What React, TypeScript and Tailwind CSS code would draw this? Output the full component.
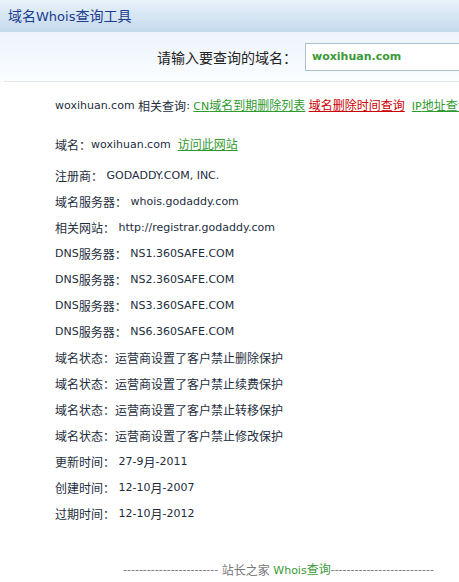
import React from "react";

const CJK_SPLIT = /([\u3000-\u303f\u3400-\u9fff\uff00-\uffef]+)/;
const CJK_TEST = /^[\u3000-\u303f\u3400-\u9fff\uff00-\uffef]+$/;

function T({ s, cjk = "text-[12px]" }: { s: string; cjk?: string }) {
  return (
    <>
      {s.split(CJK_SPLIT).map((p, i) =>
        p === "" ? null : CJK_TEST.test(p) ? (
          <span key={i} className={cjk + " font-['Noto_Sans_CJK_SC',sans-serif]"}>
            {p}
          </span>
        ) : (
          <span key={i}>{p}</span>
        )
      )}
    </>
  );
}

const rows: [string, string][] = [
  ["注册商：", " GODADDY.COM, INC."],
  ["域名服务器：", " whois.godaddy.com"],
  ["相关网站：", " http://registrar.godaddy.com"],
  ["DNS服务器：", " NS1.360SAFE.COM"],
  ["DNS服务器：", " NS2.360SAFE.COM"],
  ["DNS服务器：", " NS3.360SAFE.COM"],
  ["DNS服务器：", " NS6.360SAFE.COM"],
  ["域名状态：", "运营商设置了客户禁止删除保护"],
  ["域名状态：", "运营商设置了客户禁止续费保护"],
  ["域名状态：", "运营商设置了客户禁止转移保护"],
  ["域名状态：", "运营商设置了客户禁止修改保护"],
  ["更新时间：", " 27-9月-2011"],
  ["创建时间：", " 12-10月-2007"],
  ["过期时间：", " 12-10月-2012"],
];

export default function App() {
  return (
    <div className="w-[459px] h-[582px] overflow-hidden bg-white font-['DejaVu_Sans','Noto_Sans_CJK_SC',sans-serif] text-[11px] text-[#1d2d3d] whitespace-nowrap">
      {/* header */}
      <div className="h-[32px] bg-gradient-to-b from-[#e9f2fa] to-[#c4d9ec] pl-[8px] flex items-center text-[13px] text-[#1a3d8f]">
        <span className="whitespace-pre">
          <T s="域名Whois查询工具" cjk="text-[14px]" />
        </span>
      </div>
      {/* search row */}
      <div className="h-[50px] bg-gradient-to-b from-[#edf4fb] to-[#fbfdff] flex">
        <div className="flex-1 ml-[4px] border-b border-[#e2e7ea] flex items-start pt-[11px] pl-[153px]">
          <div className="h-[28px] flex items-center text-[14px] text-[#222] font-['Noto_Sans_CJK_SC',sans-serif]">
            请输入要查询的域名：
          </div>
          <div className="ml-[8px] h-[28px] w-[200px] shrink-0 border border-[#a8c2d0] bg-white flex items-center pl-[6px] text-[11px] font-bold text-[#3a9a38]">
            woxihuan.com
          </div>
        </div>
      </div>
      {/* content */}
      <div className="pl-[55px] pt-[14px]">
        <div className="h-[20px] flex items-center whitespace-pre">
          <span>woxihuan.com </span>
          <T s="相关查询" />
          <span>: </span>
          <span className="underline text-[#2f9a2f]">
            <T s="CN域名到期删除列表" />
          </span>
          <span> </span>
          <span className="underline text-[#cc0000]">
            <T s="域名删除时间查询" />
          </span>
          <span>{"  "}</span>
          <span className="underline text-[#2f9a2f]">
            <T s="IP地址查询" />
          </span>
        </div>
        <div className="mt-[19px] h-[20px] flex items-center whitespace-pre">
          <T s="域名：" />
          <span>woxihuan.com{"  "}</span>
          <span className="underline text-[#2f9a2f]">
            <T s="访问此网站" />
          </span>
        </div>
        <div className="mt-[8px] flex flex-col">
          {rows.map(([k, v], i) => (
            <div key={i} className="h-[26px] flex items-center whitespace-pre">
              <T s={k} />
              <T s={v} />
            </div>
          ))}
        </div>
      </div>
      {/* footer */}
      <div className="mt-[33px] h-[20px] flex items-center pl-[123px] text-[#777] whitespace-pre">
        <span>------------------------ </span>
        <T s="站长之家" />
        <span> </span>
        <span className="text-[#3a9a38]">
          <T s="Whois查询" />
        </span>
        <span>--------------------------</span>
      </div>
    </div>
  );
}
